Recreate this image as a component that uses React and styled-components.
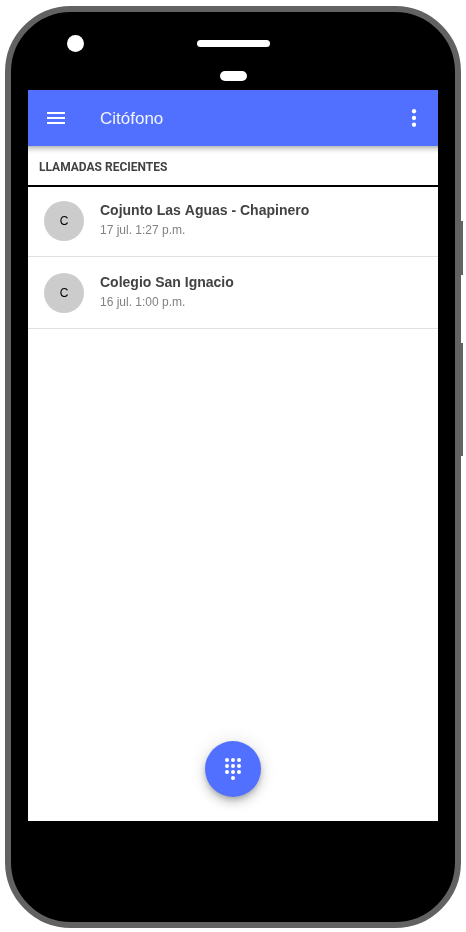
import React from "react";
import styled, { createGlobalStyle } from "styled-components";

const GlobalStyle = createGlobalStyle`
  *, *::before, *::after { box-sizing: border-box; }
  body { margin: 0; background: #fff; font-family: "Liberation Sans", Arial, sans-serif; overflow: hidden; }
`;

const Stage = styled.main`
  height: 932px;
  width: 466px;
  padding: 6px 5px 4px;
`;

const Phone = styled.div`
  position: relative;
  width: 456px;
  height: 922px;
  border: 6px solid #626262;
  border-radius: 66px;
  background: #000;
  padding: 0 17px;
`;

const SideButton = styled.span`
  position: absolute;
  right: -8px;
  top: ${({ $top }) => $top}px;
  width: 2px;
  height: ${({ $height }) => $height}px;
  background: #626262;
`;

const Sensors = styled.div`
  height: 78px;
  display: grid;
  grid-template-columns: 1fr 73px 1fr;
  grid-template-rows: 17px 10px;
  row-gap: 19px;
  padding-top: 23px;
  align-items: center;
  justify-items: center;
`;

const Camera = styled.span`
  justify-self: start;
  margin-left: 39px;
  width: 17px;
  height: 17px;
  border-radius: 50%;
  background: #fff;
`;

const Speaker = styled.span`
  width: 73px;
  height: 7px;
  border-radius: 4px;
  background: #fff;
`;

const Proximity = styled.span`
  grid-column: 2;
  grid-row: 2;
  width: 27px;
  height: 10px;
  border-radius: 5px;
  background: #fff;
`;

const Screen = styled.div`
  position: relative;
  display: flex;
  flex-direction: column;
  height: 731px;
  background: #fff;
`;

const Toolbar = styled.header`
  position: relative;
  z-index: 1;
  flex: none;
  display: flex;
  align-items: center;
  height: 56px;
  padding: 0 12px 0 16px;
  background: #5170ff;

  &::after {
    content: "";
    position: absolute;
    top: 100%;
    left: 0;
    right: 0;
    height: 8px;
    background: linear-gradient(
      rgba(0, 0, 0, 0.28),
      rgba(0, 0, 0, 0.13) 35%,
      rgba(0, 0, 0, 0.03) 75%,
      rgba(0, 0, 0, 0)
    );
  }
`;

const IconButton = styled.button`
  display: flex;
  padding: 0;
  border: 0;
  background: none;
  color: #fff;
`;

const AppTitle = styled.h1`
  flex: 1;
  margin: 0 0 0 32px;
  padding-top: 2px;
  font-size: 17px;
  font-weight: 400;
  line-height: 24px;
  color: rgba(255, 255, 255, 0.93);
  will-change: transform;
`;

const SectionTitle = styled.h2`
  flex: none;
  height: 41px;
  margin: 0;
  padding-left: 11px;
  border-bottom: 2px solid #000;
  font: 700 12px/42px Roboto, sans-serif;
  color: #424242;
  will-change: transform;
`;

const CallList = styled.ul`
  margin: -2px 0 0;
  padding: 0;
  list-style: none;
  will-change: transform;
`;

const CallRow = styled.li`
  display: flex;
  gap: 16px;
  height: 72px;
  padding: 16px 16px 0;
  border-bottom: 1px solid #e0e0e0;
`;

const Avatar = styled.span`
  flex: none;
  width: 40px;
  height: 40px;
  border-radius: 50%;
  background: #ccc;
  color: #000;
  font-size: 12px;
  line-height: 40px;
  text-align: center;
`;

const CallName = styled.div`
  font-size: 14px;
  font-weight: 700;
  line-height: 18px;
  font-kerning: none;
  color: #424242;
`;

const CallTime = styled.div`
  margin-top: 2px;
  font-size: 12px;
  line-height: 18px;
  color: #828282;
`;

const DialButton = styled.button`
  display: flex;
  align-items: center;
  justify-content: center;
  width: 56px;
  height: 56px;
  margin: auto auto 24px;
  padding: 0;
  border: 0;
  border-radius: 50%;
  background: #5170ff;
  color: #fff;
  box-shadow: 0 3px 5px -1px rgba(0, 0, 0, 0.2), 0 6px 10px rgba(0, 0, 0, 0.14), 0 1px 18px rgba(0, 0, 0, 0.12);
`;

const MenuIcon = () => (
  <svg width="24" height="24" viewBox="0 0 24 24" fill="currentColor" aria-hidden="true">
    <path d="M3 18h18v-2H3v2zm0-5h18v-2H3v2zm0-7v2h18V6H3z" />
  </svg>
);

const DotsIcon = ({ dots, radius }) => (
  <svg width="24" height="24" viewBox="0 0 24 24" fill="currentColor" aria-hidden="true">
    {dots.map(([x, y]) => (
      <circle key={`${x}-${y}`} cx={x} cy={y} r={radius} />
    ))}
  </svg>
);

const moreDots = [[12, 5.25], [12, 12], [12, 18.75]];

const keypadDots = [
  [6, 3], [12, 3], [18, 3],
  [6, 9], [12, 9], [18, 9],
  [6, 15], [12, 15], [18, 15],
  [12, 21],
];

const calls = [
  { name: "Cojunto Las Aguas - Chapinero", time: "17 jul. 1:27 p.m." },
  { name: "Colegio San Ignacio", time: "16 jul. 1:00 p.m." },
];

export default function App() {
  return (
    <>
      <GlobalStyle />
      <Stage>
        <Phone>
          <SideButton $top={209} $height={54} />
          <SideButton $top={331} $height={113} />
          <Sensors>
            <Camera />
            <Speaker />
            <Proximity />
          </Sensors>
          <Screen>
            <Toolbar>
              <IconButton aria-label="Menú">
                <MenuIcon />
              </IconButton>
              <AppTitle>Citófono</AppTitle>
              <IconButton aria-label="Más opciones">
                <DotsIcon dots={moreDots} radius={2.15} />
              </IconButton>
            </Toolbar>
            <SectionTitle>LLAMADAS RECIENTES</SectionTitle>
            <CallList>
              {calls.map(({ name, time }) => (
                <CallRow key={name}>
                  <Avatar>{name[0]}</Avatar>
                  <div>
                    <CallName>{name}</CallName>
                    <CallTime>{time}</CallTime>
                  </div>
                </CallRow>
              ))}
            </CallList>
            <DialButton aria-label="Marcar">
              <DotsIcon dots={keypadDots} radius={2} />
            </DialButton>
          </Screen>
        </Phone>
      </Stage>
    </>
  );
}
